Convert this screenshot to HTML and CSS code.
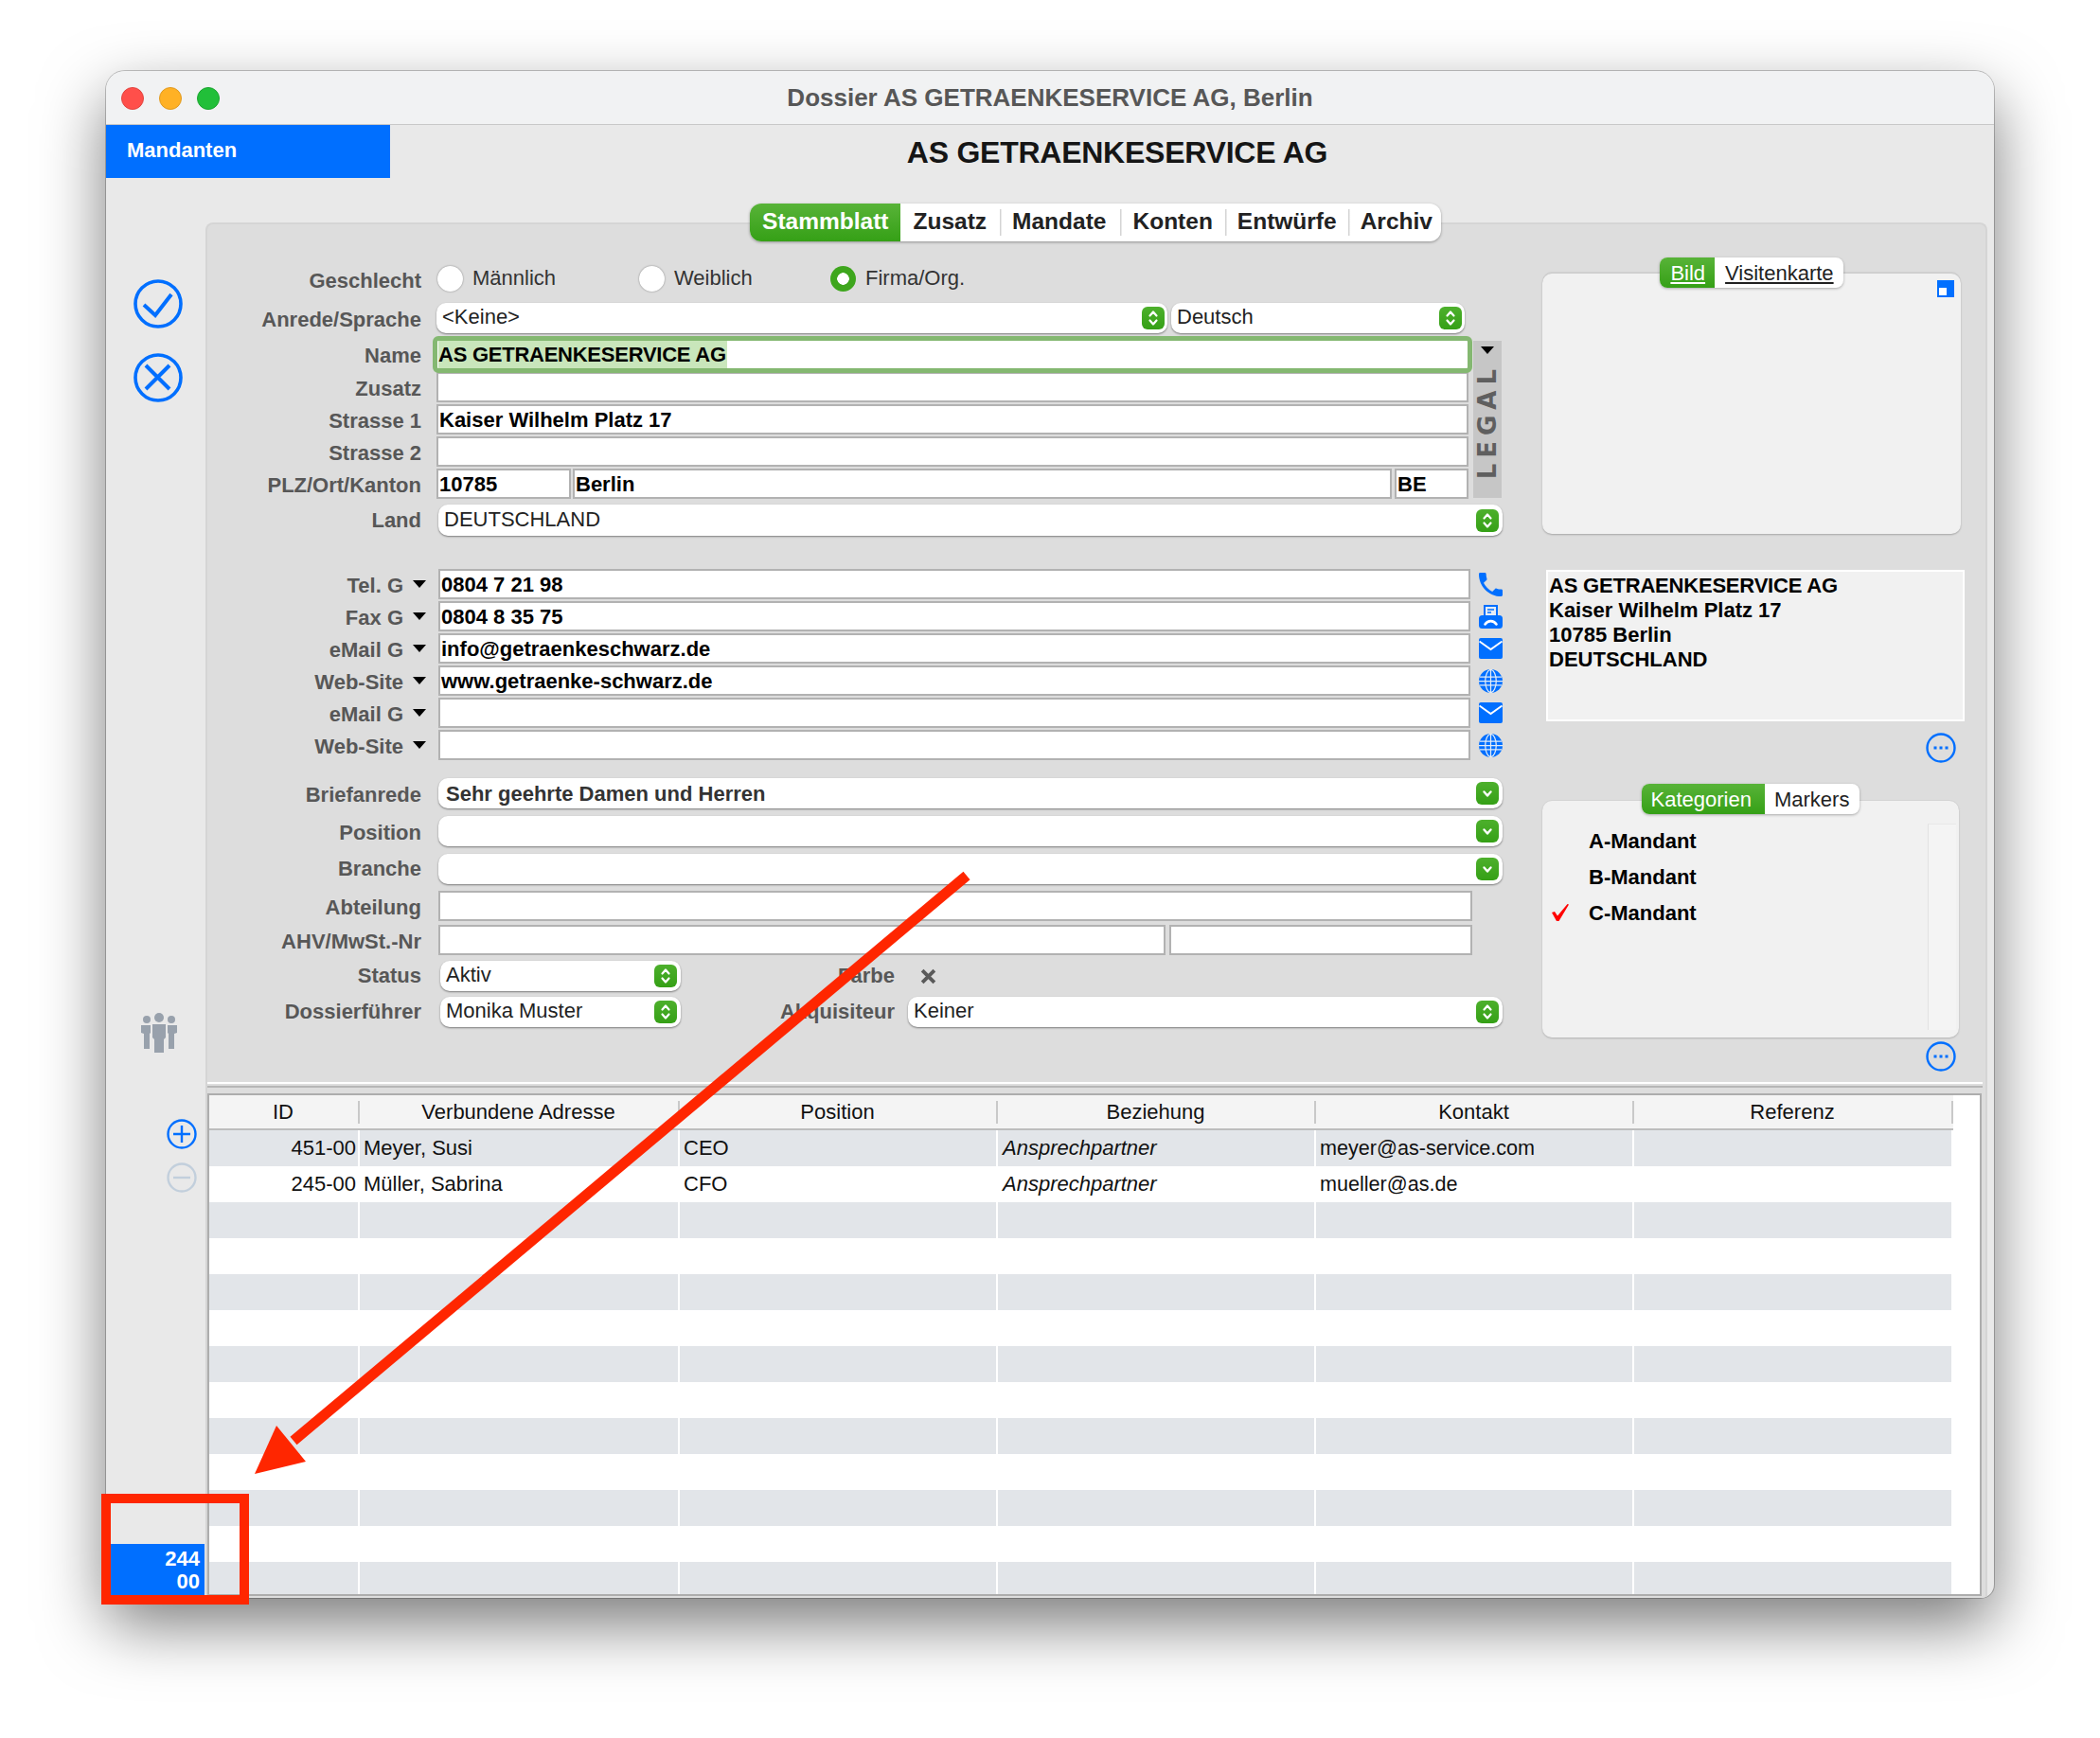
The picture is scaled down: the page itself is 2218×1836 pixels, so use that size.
FILE: index.html
```html
<!DOCTYPE html>
<html lang="de">
<head>
<meta charset="utf-8">
<title>Dossier AS GETRAENKESERVICE AG, Berlin</title>
<link rel="stylesheet" href="styles.css">
</head>
<body>
<svg class="defs" width="0" height="0">
  <symbol id="updown" viewBox="0 0 24 24"><path d="M8.5 9.5 12 5.500l3.500 4M8.500 14.500 12 18.500l3.500-4" fill="none" stroke="#fff" stroke-width="2.200" stroke-linecap="round" stroke-linejoin="round"/></symbol>
  <symbol id="down" viewBox="0 0 24 24"><path d="M8.500 10.500 12 14.500l3.500-4" fill="none" stroke="#fff" stroke-width="2.400" stroke-linecap="round" stroke-linejoin="round"/></symbol>
  <symbol id="phone" viewBox="3 3 18 18"><path d="M6.600 10.800c1.400 2.800 3.800 5.100 6.600 6.600l2.200-2.200c.3-.3.7-.4 1-.2 1.100.4 2.300.6 3.600.6.600 0 1 .4 1 1V20c0 .6-.4 1-1 1C10.600 21 3 13.400 3 4c0-.6.400-1 1-1h3.500c.600 0 1 .4 1 1 0 1.300.2 2.500.6 3.600.1.300 0 .7-.2 1z" fill="#006fff"/></symbol>
  <symbol id="fax" viewBox="0 0 25 25"><rect x="5" y="0" width="15" height="14" fill="#006fff"/><rect x="7" y="2" width="11" height="10" fill="#e4ecf6"/><path d="M9 5h7M9 8h4" stroke="#006fff" stroke-width="1.500"/><rect x="0" y="11" width="25" height="14" rx="3.500" fill="#006fff"/><path d="M6.500 20.500c3-4.500 9-4.500 12 0" fill="none" stroke="#fff" stroke-width="2.600" stroke-linecap="round"/></symbol>
  <symbol id="mail" viewBox="0 0 25 22"><rect width="25" height="22" rx="2" fill="#006fff"/><path d="M0.500 3.500 12.500 12 24.500 3.500" fill="none" stroke="#fff" stroke-width="2"/></symbol>
  <symbol id="globe" viewBox="0 0 26 26"><circle cx="13" cy="13" r="13" fill="#006fff"/><g fill="none" stroke="#e4ecf6" stroke-width="1.300"><ellipse cx="13" cy="13" rx="6" ry="12.500"/><path d="M13 0v26M1 8.500h24M0 13h26M1 17.500h24"/></g></symbol>
  <symbol id="dots" viewBox="0 0 32 32"><circle cx="16" cy="16" r="14.500" fill="none" stroke="#006fff" stroke-width="2.400"/><path d="M8.500 14.500h3v3h-3zM14.500 14.500h3v3h-3zM20.500 14.500h3v3h-3z" fill="#006fff"/></symbol>
</svg>

<div class="window">
  <header class="titlebar">
    <div class="lights"><span class="light light-red"></span><span class="light light-yellow"></span><span class="light light-green"></span></div>
    <div class="wintitle">Dossier AS GETRAENKESERVICE AG, Berlin</div>
    <div></div>
  </header>

  <div class="topbar">
    <div class="mandanten">Mandanten</div>
    <h1 class="heading">AS GETRAENKESERVICE AG</h1>
  </div>

  <div class="body">
    <aside class="sidebar">
      <svg class="act act-first" viewBox="0 0 52 52"><circle cx="26" cy="26" r="24" fill="none" stroke="#006fff" stroke-width="3.600"/><path d="M11 27l12 11L40 16" fill="none" stroke="#006fff" stroke-width="4"/></svg>
      <svg class="act act-second" viewBox="0 0 52 52"><circle cx="26" cy="26" r="24" fill="none" stroke="#006fff" stroke-width="3.600"/><path d="M13 13l25 25M38 13 13 38" fill="none" stroke="#006fff" stroke-width="4"/></svg>
      <svg class="people" viewBox="0 0 40 42"><g fill="#98a1ac"><circle cx="7" cy="7" r="4"/><circle cx="33" cy="7" r="4"/><path d="M1 13h10v8l-1 1v16H4V22l-3-1zM29 13h10v8l-3 1v16h-6V22l-1-1z"/><circle cx="20" cy="5" r="5"/><path d="M13 12h14v14l-2 2v14H15V28l-2-2z"/></g></svg>
      <svg class="small-round plus" viewBox="0 0 32 32"><circle cx="16" cy="16" r="14.500" fill="none" stroke="#006fff" stroke-width="2.400"/><path d="M16 7v18M7 16h18" stroke="#006fff" stroke-width="2.400"/></svg>
      <svg class="small-round minus" viewBox="0 0 32 32"><circle cx="16" cy="16" r="14.500" fill="none" stroke="#c2cfdc" stroke-width="2.400"/><path d="M7 16h18" stroke="#c2cfdc" stroke-width="2.400"/></svg>
      <div class="badge">244<br>00</div>
    </aside>

    <main class="main">
      <nav class="tabs">
        <span class="tab tab-on">Stammblatt</span>
        <span class="tab tab-first">Zusatz</span>
        <span class="tab tab-sep tab-mandate">Mandate</span>
        <span class="tab tab-sep">Konten</span>
        <span class="tab tab-sep tab-entw">Entwürfe</span>
        <span class="tab tab-sep tab-last">Archiv</span>
      </nav>

      <section class="panel">
        <div class="upper">
          <form class="form">
            <div class="row row-gender">
              <label class="lbl lbl-gender">Geschlecht</label>
              <span class="radio radio-first"></span><span class="rtext rtext-m">Männlich</span>
              <span class="radio"></span><span class="rtext rtext-w">Weiblich</span>
              <span class="radio radio-on"></span><span class="rtext">Firma/Org.</span>
            </div>
            <div class="row row-anrede">
              <label class="lbl">Anrede/Sprache</label>
              <div class="sel sel-anrede">&lt;Keine&gt;<svg class="step"><use href="#updown"/></svg></div>
              <div class="sel sel-lang">Deutsch<svg class="step"><use href="#updown"/></svg></div>
            </div>

            <div class="addr">
              <div class="addr-rows">
                <div class="row row-name">
                  <label class="lbl">Name</label>
                  <div class="fld fld-focus"><span class="hl">AS GETRAENKESERVICE AG</span></div>
                </div>
                <div class="row"><label class="lbl">Zusatz</label><div class="fld"></div></div>
                <div class="row row-gap"><label class="lbl">Strasse 1</label><div class="fld">Kaiser Wilhelm Platz 17</div></div>
                <div class="row row-gap"><label class="lbl">Strasse 2</label><div class="fld"></div></div>
                <div class="row row-gap row-plz">
                  <label class="lbl">PLZ/Ort/Kanton</label>
                  <div class="fld fld-plz">10785</div>
                  <div class="fld fld-ort">Berlin</div>
                  <div class="fld fld-kt">BE</div>
                </div>
              </div>
              <div class="legal"><span class="tri tri-legal"></span><span class="legal-text">LEGAL</span></div>
            </div>

            <div class="row row-land">
              <label class="lbl lbl-flat">Land</label>
              <div class="sel sel-wide sel-land">DEUTSCHLAND<svg class="step"><use href="#updown"/></svg></div>
            </div>

            <div class="comm">
              <div class="row row-c"><label class="lbl lbl-c">Tel. G<span class="tri"></span></label><div class="fld fld-c">0804 7 21 98</div><svg class="cicon"><use href="#phone"/></svg></div>
              <div class="row row-c"><label class="lbl lbl-c">Fax G<span class="tri"></span></label><div class="fld fld-c">0804 8 35 75</div><svg class="cicon"><use href="#fax"/></svg></div>
              <div class="row row-c"><label class="lbl lbl-c">eMail G<span class="tri"></span></label><div class="fld fld-c">info@getraenkeschwarz.de</div><svg class="cicon cicon-mail"><use href="#mail"/></svg></div>
              <div class="row row-c"><label class="lbl lbl-c">Web-Site<span class="tri"></span></label><div class="fld fld-c">www.getraenke-schwarz.de</div><svg class="cicon"><use href="#globe"/></svg></div>
              <div class="row row-c"><label class="lbl lbl-c">eMail G<span class="tri"></span></label><div class="fld fld-c"></div><svg class="cicon cicon-mail"><use href="#mail"/></svg></div>
              <div class="row row-c"><label class="lbl lbl-c">Web-Site<span class="tri"></span></label><div class="fld fld-c"></div><svg class="cicon"><use href="#globe"/></svg></div>
            </div>

            <div class="row row-brief">
              <label class="lbl">Briefanrede</label>
              <div class="sel sel-wide sel-bold">Sehr geehrte Damen und Herren<svg class="step"><use href="#down"/></svg></div>
            </div>
            <div class="row row-pos">
              <label class="lbl">Position</label>
              <div class="sel sel-wide"><svg class="step"><use href="#down"/></svg></div>
            </div>
            <div class="row row-pos">
              <label class="lbl lbl-flat">Branche</label>
              <div class="sel sel-wide"><svg class="step"><use href="#down"/></svg></div>
            </div>
            <div class="row row-abt">
              <label class="lbl">Abteilung</label>
              <div class="fld fld-abt"></div>
            </div>
            <div class="row row-ahv">
              <label class="lbl">AHV/MwSt.-Nr</label>
              <div class="fld fld-ahv1"></div>
              <div class="fld fld-ahv2"></div>
            </div>
            <div class="row row-status">
              <label class="lbl lbl-flat">Status</label>
              <div class="sel sel-status">Aktiv<svg class="step"><use href="#updown"/></svg></div>
              <label class="lbl lbl-flat lbl-right">Farbe</label>
              <svg class="farbe-x" viewBox="0 0 16 16"><path d="M2 2l12 12M14 2 2 14" stroke="#5a5a5a" stroke-width="3.600"/></svg>
            </div>
            <div class="row row-status">
              <label class="lbl lbl-flat">Dossierführer</label>
              <div class="sel sel-status">Monika Muster<svg class="step"><use href="#updown"/></svg></div>
              <label class="lbl lbl-flat lbl-right">Akquisiteur</label>
              <div class="sel sel-akq">Keiner<svg class="step"><use href="#updown"/></svg></div>
            </div>
          </form>

          <div class="right">
            <div class="mini-tabs"><span class="mini mini-on"><u>Bild</u></span><span class="mini"><u>Visitenkarte</u></span></div>
            <div class="image-box"><span class="corner"></span></div>
            <div class="address"><span class="caps">AS GETRAENKESERVICE AG</span><br>Kaiser Wilhelm Platz 17<br>10785 Berlin<br>DEUTSCHLAND</div>
            <svg class="dots dots-a"><use href="#dots"/></svg>
            <div class="mini-tabs mini-tabs-cat"><span class="mini mini-on mini-kat">Kategorien</span><span class="mini mini-mark">Markers</span></div>
            <div class="cat-box">
              <ul class="cat-list">
                <li class="cat">A-Mandant</li>
                <li class="cat">B-Mandant</li>
                <li class="cat"><svg class="redcheck" viewBox="0 0 18 18"><path d="M0 9l3-1 3 4.500L16.500 0 18 .5 7.500 18H5z" fill="#f00"/></svg>C-Mandant</li>
              </ul>
              <div class="cat-scroll"></div>
            </div>
            <svg class="dots dots-b"><use href="#dots"/></svg>
          </div>
        </div>

        <div class="divider"></div>

        <div class="table">
          <div class="thead">
            <div class="th">ID</div><div class="th">Verbundene Adresse</div><div class="th">Position</div><div class="th">Beziehung</div><div class="th">Kontakt</div><div class="th">Referenz</div>
          </div>
          <div class="tr"><div class="td td-id">451-00</div><div class="td">Meyer, Susi</div><div class="td">CEO</div><div class="td td-it">Ansprechpartner</div><div class="td td-mail">meyer@as-service.com</div><div class="td"></div></div>
          <div class="tr"><div class="td td-id">245-00</div><div class="td">Müller, Sabrina</div><div class="td">CFO</div><div class="td td-it">Ansprechpartner</div><div class="td td-mail">mueller@as.de</div><div class="td"></div></div>
          <div class="tr"><div class="td"></div><div class="td"></div><div class="td"></div><div class="td"></div><div class="td"></div><div class="td"></div></div>
          <div class="tr"><div class="td"></div><div class="td"></div><div class="td"></div><div class="td"></div><div class="td"></div><div class="td"></div></div>
          <div class="tr"><div class="td"></div><div class="td"></div><div class="td"></div><div class="td"></div><div class="td"></div><div class="td"></div></div>
          <div class="tr"><div class="td"></div><div class="td"></div><div class="td"></div><div class="td"></div><div class="td"></div><div class="td"></div></div>
          <div class="tr"><div class="td"></div><div class="td"></div><div class="td"></div><div class="td"></div><div class="td"></div><div class="td"></div></div>
          <div class="tr"><div class="td"></div><div class="td"></div><div class="td"></div><div class="td"></div><div class="td"></div><div class="td"></div></div>
          <div class="tr"><div class="td"></div><div class="td"></div><div class="td"></div><div class="td"></div><div class="td"></div><div class="td"></div></div>
          <div class="tr"><div class="td"></div><div class="td"></div><div class="td"></div><div class="td"></div><div class="td"></div><div class="td"></div></div>
          <div class="tr"><div class="td"></div><div class="td"></div><div class="td"></div><div class="td"></div><div class="td"></div><div class="td"></div></div>
          <div class="tr"><div class="td"></div><div class="td"></div><div class="td"></div><div class="td"></div><div class="td"></div><div class="td"></div></div>
          <div class="tr"><div class="td"></div><div class="td"></div><div class="td"></div><div class="td"></div><div class="td"></div><div class="td"></div></div>
        </div>
      </section>
    </main>
  </div>
</div>

<svg class="annotation" viewBox="0 0 2218 1836">
  <path d="M1021 925 310 1522" fill="none" stroke="#ff2600" stroke-width="11"/>
  <path d="M269 1557 292 1506 323 1544z" fill="#ff2600"/>
  <rect x="112" y="1583" width="146" height="107" fill="none" stroke="#ff2600" stroke-width="10"/>
</svg>
</body>
</html>
```

FILE: styles.css
```css
* { box-sizing: border-box; }
html, body { margin: 0; height: 100%; }
body {
  position: relative;
  width: 2218px;
  height: 1836px;
  padding: 75px 0 0 112px;
  overflow: hidden;
  background: #fff;
  font: 22px/26px "Liberation Sans", Arial, sans-serif;
  color: #000;
}
.defs { position: absolute; }

.window {
  width: 1994px;
  height: 1613px;
  display: flex;
  flex-direction: column;
  background: #e9e9e9;
  border-radius: 20px 20px 14px 14px;
  overflow: hidden;
  box-shadow: 0 0 0 1px rgba(0,0,0,.22), 0 28px 68px rgba(0,0,0,.52);
}

.titlebar {
  height: 57px;
  flex: none;
  display: grid;
  grid-template-columns: 1fr auto 1fr;
  align-items: center;
  background: #f1f2f3;
  border-bottom: 1px solid #c8c8c8;
}
.lights { display: flex; gap: 16px; padding: 2px 0 0 16px; }
.light { width: 24px; height: 24px; border-radius: 50%; }
.light-red { background: #ff4f4a; border: 1px solid #e14640; }
.light-yellow { background: #ffb125; border: 1px solid #e09a20; }
.light-green { background: #21bf39; border: 1px solid #1ca530; }
.wintitle { font-size: 26px; font-weight: 700; color: #575757; white-space: nowrap; }

.topbar { height: 56px; flex: none; display: flex; }
.mandanten {
  width: 300px;
  padding: 14px 0 0 22px;
  background: #006fff;
  color: #fff;
  font-weight: 700;
}
.heading {
  flex: 1;
  margin: 0;
  padding: 13px 158px 0 0;
  text-align: center;
  font-size: 32px;
  line-height: 32px;
  font-weight: 700;
  letter-spacing: -.25px;
  color: #151515;
}

.body { flex: 1; display: flex; min-height: 0; }

.sidebar { width: 105px; flex: none; display: flex; flex-direction: column; }
.act { width: 52px; height: 52px; margin-left: 29px; flex: none; }
.act-first { margin-top: 107px; }
.act-second { margin-top: 26px; }
.people { width: 40px; height: 42px; margin: 645px 0 0 36px; flex: none; }
.small-round { width: 32px; height: 32px; margin-left: 64px; flex: none; }
.plus { margin-top: 70px; }
.minus { margin-top: 14px; }
.badge {
  margin-top: auto;
  width: 104px;
  height: 57px;
  padding: 4px 5px 0 0;
  background: #006fff;
  color: #fff;
  font-weight: 700;
  line-height: 24px;
  text-align: right;
}

.main { flex: 1; min-width: 0; display: flex; flex-direction: column; padding: 27px 7px 0 0; }

.tabs {
  position: relative;
  z-index: 1;
  align-self: center;
  flex: none;
  display: flex;
  height: 40px;
  margin: 0 2px 0 0;
  background: #fff;
  border-radius: 12px;
  box-shadow: 0 1px 3px rgba(0,0,0,.35);
  font-size: 24.500px;
  line-height: 38px;
  font-weight: 700;
  color: #222;
  overflow: hidden;
}
.tab { padding: 0 13px; white-space: nowrap; }
.tab-on { background: linear-gradient(#58b338, #35a016); color: #fff; }
.tab-first { padding-right: 14px; }
.tab-mandate { padding-right: 15px; }
.tab-entw { padding-right: 12px; }
.tab-last { padding-right: 9px; }
.tab-sep { background: linear-gradient(#d4d4d4, #d4d4d4) left center / 1.500px 28px no-repeat; }

.panel {
  flex: 1;
  min-height: 0;
  margin-top: -20px;
  display: flex;
  flex-direction: column;
  background: #dddddd;
  border-top: 2px solid #d5d5d5;
  border-left: 2px solid #d5d5d5;
  border-right: 2px solid #d5d5d5;
  border-radius: 8px 8px 0 0;
}
.upper { height: 906px; flex: none; display: flex; }

.form { width: 1368px; flex: none; padding-top: 44px; }
.row { display: flex; align-items: center; height: 32px; }
.lbl { width: 226px; flex: none; padding-top: 3px; text-align: right; font-weight: 700; color: #575757; white-space: nowrap; }
.lbl-flat { padding-top: 0; }
.fld {
  flex: 1;
  height: 32px;
  margin-left: 16px;
  padding-left: 1px;
  background: #fff;
  border: 2px solid #b2b2b2;
  font-weight: 700;
  line-height: 30px;
  white-space: nowrap;
}

.row-gender { height: 27px; }
.lbl-gender { position: relative; top: 1px; }
.radio {
  width: 27px;
  height: 27px;
  flex: none;
  margin-left: 18px;
  border-radius: 50%;
  background: #fff;
  box-shadow: 0 0 2px rgba(0,0,0,.45);
}
.radio-first { margin-left: 17px; }
.radio-on {
  background: radial-gradient(circle, #fff 0 6px, #3ea61d 6.500px);
  box-shadow: none;
}
.rtext { margin-left: 10px; color: #333; position: relative; top: -1px; }
.rtext-m { width: 158px; }
.rtext-w { width: 147px; }

.row-anrede { margin-top: 12px; }
.sel {
  position: relative;
  height: 32px;
  background: #fff;
  border-radius: 10px;
  box-shadow: 0 1px 2px rgba(0,0,0,.45);
  padding-left: 6px;
  color: #222;
  line-height: 30px;
  white-space: nowrap;
}
.step {
  position: absolute;
  right: 3px;
  top: 4px;
  width: 24px;
  height: 24px;
  border-radius: 6px;
  background: linear-gradient(#4db02c, #35a016);
}
.sel-wide .step, .sel-akq .step, .sel-status .step { right: 4px; }
.sel-anrede { width: 772px; margin-left: 16px; }
.sel-lang { width: 310px; margin-left: 4px; }
.sel-wide { flex: 1; margin-left: 18px; }
.sel-bold { padding-left: 8px; font-weight: 700; color: #333; line-height: 33px; }
.sel-land { line-height: 32px; }
.sel-land .step { top: 5px; }

.addr { display: flex; margin-top: 3px; }
.addr-rows { width: 1332px; flex: none; }
.row-name { height: 38px; }
.fld-focus {
  position: relative;
  z-index: 1;
  height: 39px;
  margin: 0 -4px 0 12px;
  padding: 0 0 0 1px;
  border: 5.500px solid #84b871;
  border-radius: 6px;
  line-height: 28px;
}
.hl { display: block; width: 305px; background: #c9e6bb; letter-spacing: -.25px; line-height: 29px; }
.row-gap { margin-top: 2px; }
.fld-plz { flex: none; width: 142px; }
.fld-ort { flex: none; width: 865px; margin-left: 2px; }
.fld-kt { flex: none; width: 78px; margin-left: 3px; padding-left: 1px; }
.legal {
  width: 30px;
  height: 166px;
  margin: 5px 0 0 5px;
  padding-top: 6px;
  display: flex;
  flex-direction: column;
  align-items: center;
  background: #c6c6c6;
}
.legal-text {
  margin-top: 10px;
  writing-mode: vertical-rl;
  transform: rotate(180deg);
  font: 700 26px/24px "DejaVu Sans", sans-serif;
  letter-spacing: 6px;
  color: #5f5f5f;
}
.tri {
  width: 0;
  height: 0;
  border-left: 7px solid transparent;
  border-right: 7px solid transparent;
  border-top: 8px solid #000;
}
.tri-legal { flex: none; }

.row-land { height: 33px; margin-top: 6px; }
.row-land .sel { height: 33px; }

.comm { margin-top: 35px; display: flex; flex-direction: column; gap: 2px; }
.lbl-c { width: 231px; display: flex; justify-content: flex-end; align-items: flex-start; }
.lbl-c .tri { margin: 7px 0 0 10px; }
.fld-c { flex: none; width: 1090px; margin-left: 13px; }
.cicon { width: 25px; height: 25px; margin-left: 9px; flex: none; }
.cicon-mail { height: 22px; }

.row-brief { margin-top: 19px; }
.row-pos { margin-top: 8px; }
.row-abt { margin-top: 7px; }
.fld-abt { flex: none; width: 1092px; margin-left: 18px; }
.row-ahv { margin-top: 4px; }
.fld-ahv1 { flex: none; width: 768px; margin-left: 18px; }
.fld-ahv2 { flex: none; width: 320px; margin-left: 4px; }
.row-status { margin-top: 6px; }
.sel-status { width: 254px; margin-left: 20px; flex: none; }
.lbl-right { width: 226px; }
.farbe-x { width: 17px; height: 17px; margin-left: 27px; flex: none; }
.sel-akq { flex: 1; margin-left: 14px; }

.right { width: 446px; margin-left: 42px; flex: none; display: flex; flex-direction: column; padding-top: 35px; }
.mini-tabs {
  position: relative;
  z-index: 1;
  align-self: center;
  display: flex;
  height: 32px;
  margin-right: 4px;
  background: #fff;
  border-radius: 8px;
  box-shadow: 0 1px 3px rgba(0,0,0,.3);
  overflow: hidden;
  line-height: 34px;
  color: #222;
}
.mini { padding: 0 10px 0 11px; white-space: nowrap; }
.mini-on { background: linear-gradient(#58b338, #35a016); color: #fff; }
.image-box {
  position: relative;
  width: 442px;
  height: 275px;
  margin-top: -15px;
  background: #f1f1f1;
  border-radius: 10px;
  box-shadow: 0 1px 2px rgba(0,0,0,.25), 0 -2px 0 #d0d0d0;
}
.corner {
  position: absolute;
  top: 7px;
  right: 7px;
  width: 18px;
  height: 18px;
  background: linear-gradient(#fff, #fff) 2px 8px / 8px 8px no-repeat #006fff;
}
.address {
  width: 442px;
  height: 160px;
  margin: 38px 0 0 4px;
  padding: 2px 0 0 1px;
  background: #f1f1f1;
  border: 2px solid #fff;
  font-weight: 700;
  line-height: 26px;
  white-space: nowrap;
}
.caps { letter-spacing: -.2px; }
.dots { width: 32px; height: 32px; flex: none; align-self: flex-end; margin-right: 9px; }
.dots-a { margin-top: 12px; }
.mini-tabs-cat { margin: 22px 6px 0 0; }
.mini-kat { padding: 0 14px 0 10px; }
.mini-mark { padding: 0 11px 0 10px; }
.cat-box {
  width: 440px;
  height: 250px;
  margin-top: -14px;
  display: flex;
  background: #f1f1f1;
  border-radius: 10px;
  box-shadow: 0 1px 2px rgba(0,0,0,.2), 0 -1px 0 #d6d6d6;
}
.cat-list { flex: 1; margin: 0; padding: 24px 0 0 49px; list-style: none; }
.cat { position: relative; height: 38px; line-height: 38px; font-weight: 700; }
.redcheck { position: absolute; left: -39px; top: 9px; width: 18px; height: 18px; }
.cat-scroll {
  width: 30px;
  margin: 24px 3px 8px 0;
  background: #f4f4f4;
  border-left: 1px solid #e2e2e2;
  border-top: 1px solid #e8e8e8;
}
.dots-b { margin-top: 4px; }

.divider {
  flex: none;
  width: 1875px;
  height: 6px;
  border-top: 2px solid #fff;
  border-bottom: 2px solid #b6b6b6;
}

.table {
  flex: none;
  width: 1874px;
  height: 531px;
  margin: 6px 0 0 0;
  background: #fff;
  border: 2px solid #adadad;
  overflow: hidden;
}
.thead, .tr { display: grid; grid-template-columns: 159px 338px 336px 336px 336px 337px; width: 1842px; }
.thead { height: 37px; background: #f4f4f4; border-bottom: 2px solid #bdbdbd; }
.th {
  padding-right: 3px;
  text-align: center;
  line-height: 35px;
  color: #111;
  background: linear-gradient(#c9c9c9, #c9c9c9) right center / 2px 24px no-repeat;
}
.tr { height: 38px; }
.tr:nth-child(even) { background: #e2e5e9; }
.td {
  padding-left: 4px;
  line-height: 38px;
  font-size: 22px;
  color: #111;
  border-right: 2px solid #fff;
  white-space: nowrap;
}
.td-id { padding: 0 2px 0 0; text-align: right; }
.td-it { font-style: italic; padding-left: 5px; }
.td-mail { font-size: 21.600px; }

.annotation {
  position: absolute;
  left: 0;
  top: 0;
  width: 2218px;
  height: 1836px;
  z-index: 10;
  pointer-events: none;
}
```
